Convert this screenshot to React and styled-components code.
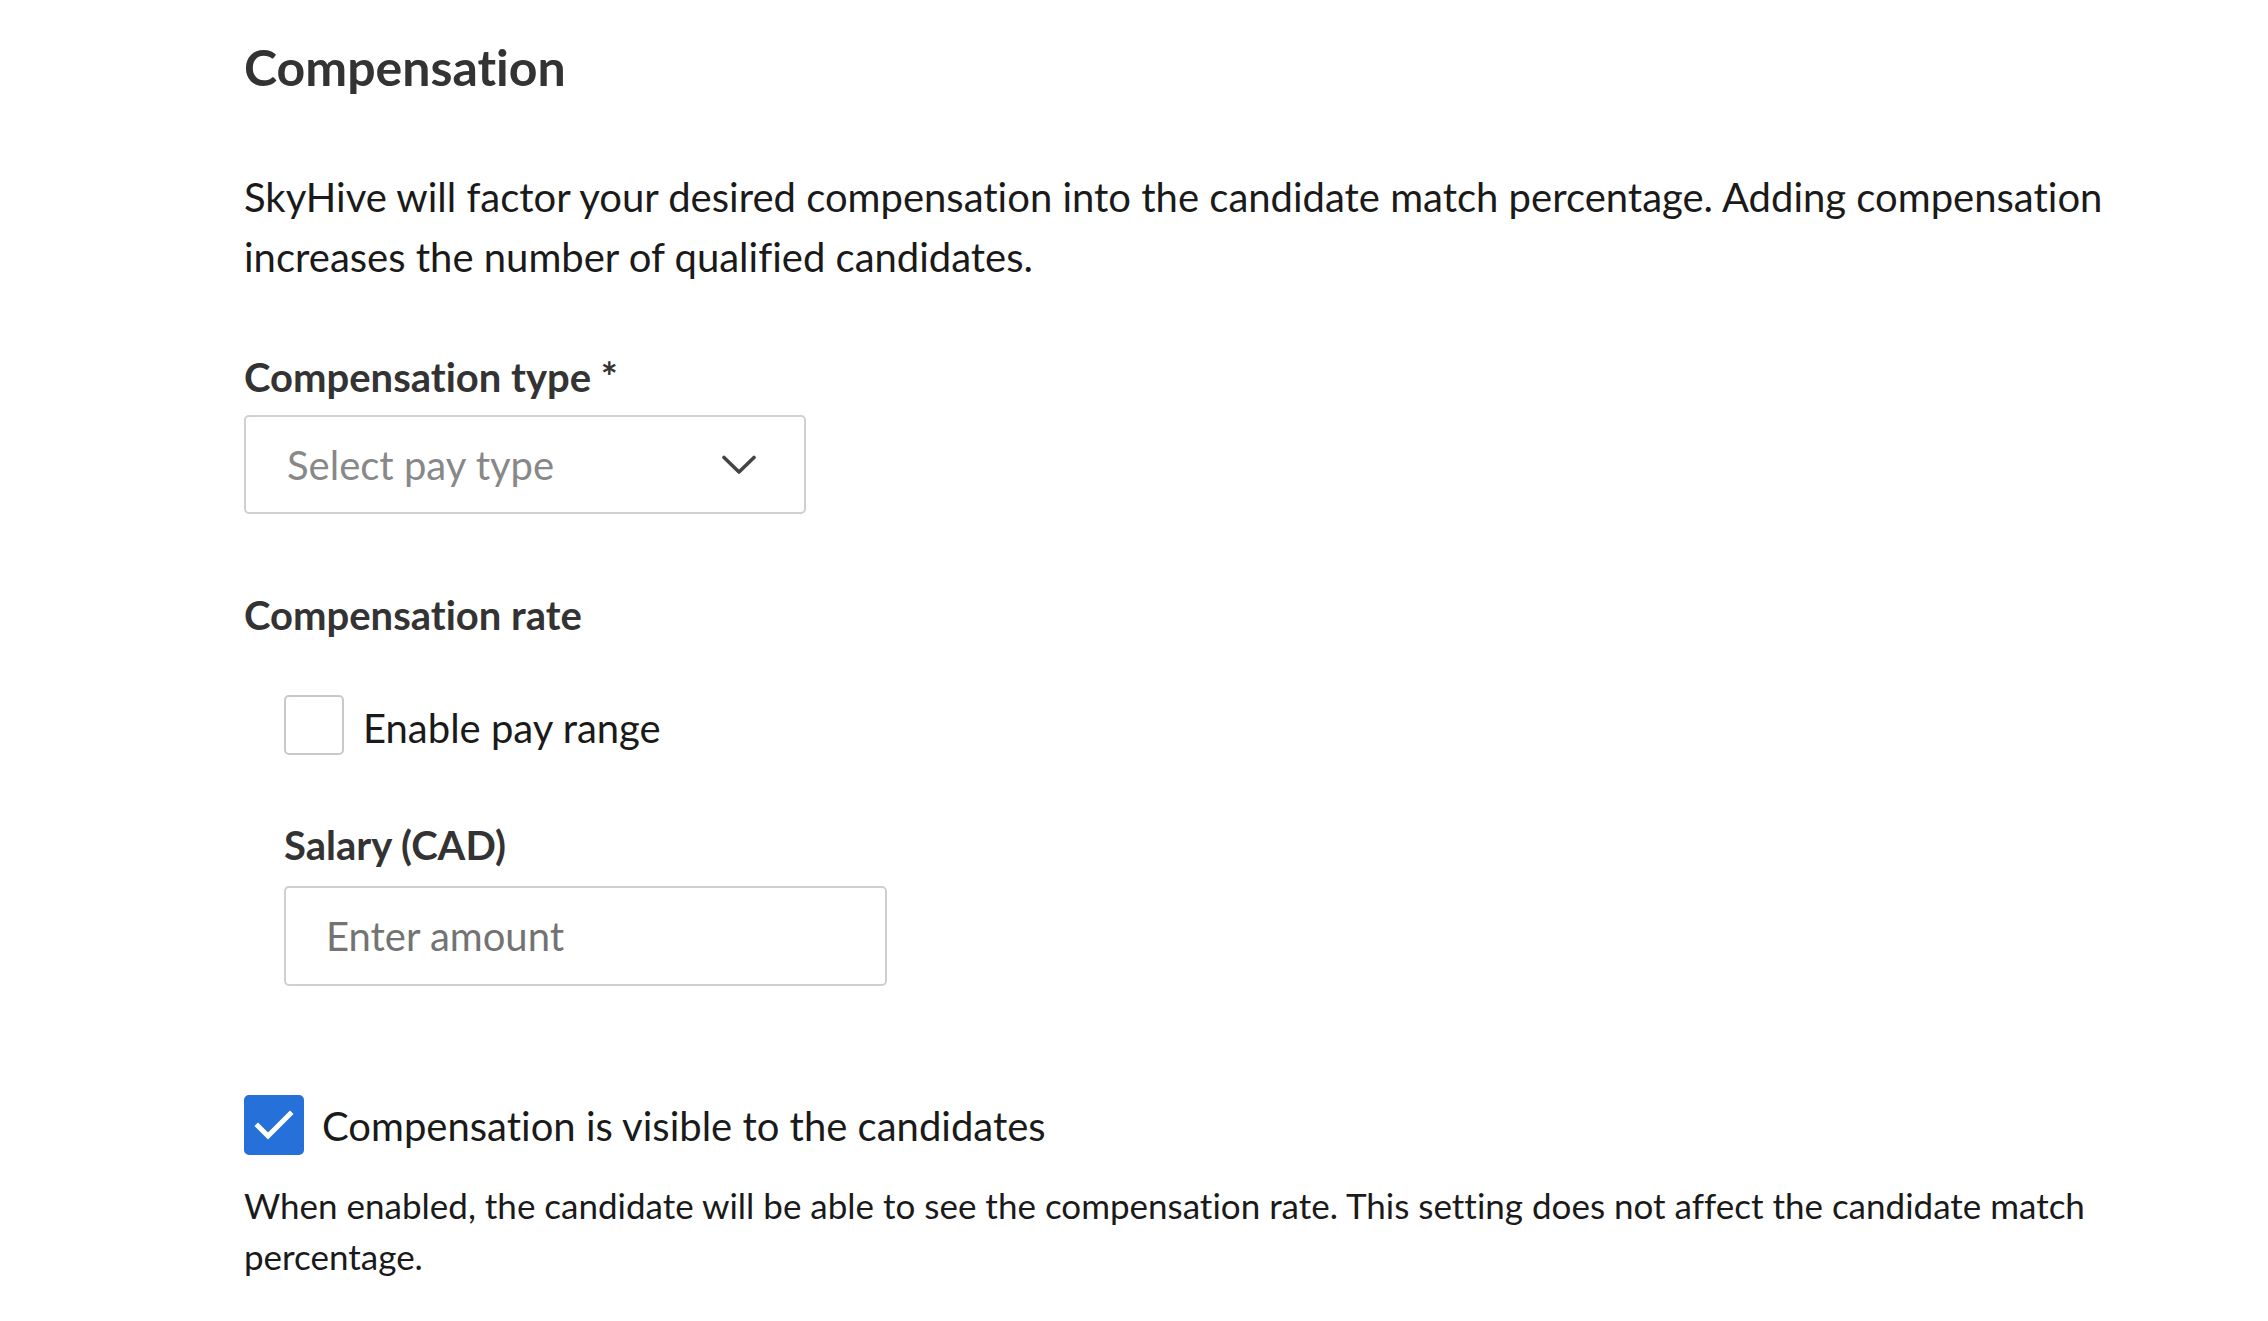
import React from "react";
import styled, { createGlobalStyle } from "styled-components";

const GlobalStyle = createGlobalStyle`
  html, body {
    margin: 0;
    padding: 0;
    background: #ffffff;
  }

  body {
    font-family: Lato, "Open Sans", "Liberation Sans", sans-serif;
    color: #1c1c1c;
    font-variant-ligatures: none;
  }

  * {
    box-sizing: border-box;
  }
`;

const Page = styled.div`
  display: flex;
  flex-direction: column;
  width: 2268px;
  padding: 38px 64px 40px 244px;
`;

const Title = styled.h2`
  margin: 0;
  font-size: 50px;
  line-height: 58px;
  font-weight: 700;
  color: #333333;
`;

const Intro = styled.p`
  margin: 71px 0 0;
  font-size: 40px;
  line-height: 60px;
  color: #1a1a1a;
`;

const Label = styled.label`
  display: block;
  margin-top: ${(p) => p.$gap}px;
  font-size: 40px;
  line-height: 48px;
  font-weight: 700;
  color: #333333;
`;

const Select = styled.div`
  display: flex;
  align-items: center;
  justify-content: space-between;
  width: 562px;
  height: 99px;
  margin-top: 14px;
  padding: 0 48px 0 41px;
  border: 2px solid #d0d0d4;
  border-radius: 5px;
  cursor: pointer;
`;

const Placeholder = styled.span`
  font-size: 40px;
  color: #888888;
`;

const Indent = styled.div`
  display: flex;
  flex-direction: column;
  padding-left: 40px;
`;

const CheckRow = styled.div`
  display: flex;
  align-items: center;
  gap: ${(p) => p.$gap}px;
  margin-top: ${(p) => p.$top}px;
  font-size: 40px;
  line-height: 60px;
  color: #1a1a1a;
`;

const CheckText = styled.span`
  padding-top: ${(p) => p.$drop || 0}px;
`;

const Box = styled.span`
  display: flex;
  align-items: center;
  justify-content: center;
  flex: none;
  width: 60px;
  height: 60px;
  border-radius: 5px;
  border: 2px solid ${(p) => (p.$checked ? "#2670d9" : "#c9c9cd")};
  background: ${(p) => (p.$checked ? "#2670d9" : "#ffffff")};
`;

const AmountInput = styled.input`
  width: 603px;
  height: 100px;
  margin-top: 17px;
  padding: 0 40px;
  border: 2px solid #cfcfd3;
  border-radius: 5px;
  font-family: inherit;
  font-size: 40px;
  color: #1c1c1c;
  outline: none;

  &::placeholder {
    color: #737373;
  }
`;

const Help = styled.p`
  margin: 24px 0 0;
  max-width: 1900px;
  font-size: 35px;
  line-height: 51px;
  color: #1a1a1a;
`;

const Chevron = () => (
  <svg width="34" height="20" viewBox="0 0 34 20" fill="none">
    <path
      d="M2 2.5 L17 17 L32 2.5"
      stroke="#444444"
      strokeWidth="3.6"
      strokeLinecap="round"
      strokeLinejoin="round"
    />
  </svg>
);

const Tick = () => (
  <svg width="40" height="32" viewBox="0 0 40 32" fill="none">
    <path
      d="M4 17 L14 27 L36 5"
      stroke="#ffffff"
      strokeWidth="5"
      strokeLinecap="square"
    />
  </svg>
);

export default function App() {
  return (
    <>
      <GlobalStyle />
      <Page>
        <Title>Compensation</Title>
        <Intro>
          SkyHive will factor your desired compensation into the candidate match
          percentage. Adding compensation increases the number of qualified
          candidates.
        </Intro>

        <Label $gap={66}>Compensation type *</Label>
        <Select>
          <Placeholder>Select pay type</Placeholder>
          <Chevron />
        </Select>

        <Label $gap={77}>Compensation rate</Label>
        <Indent>
          <CheckRow $top={53} $gap={19}>
            <Box />
            <CheckText $drop={6}>Enable pay range</CheckText>
          </CheckRow>
          <Label $gap={63}>Salary (CAD)</Label>
          <AmountInput placeholder="Enter amount" />
        </Indent>

        <CheckRow $top={108} $gap={18}>
          <Box $checked>
            <Tick />
          </Box>
          <CheckText $drop={2}>Compensation is visible to the candidates</CheckText>
        </CheckRow>
        <Help>
          When enabled, the candidate will be able to see the compensation rate.
          This setting does not affect the candidate match percentage.
        </Help>
      </Page>
    </>
  );
}
